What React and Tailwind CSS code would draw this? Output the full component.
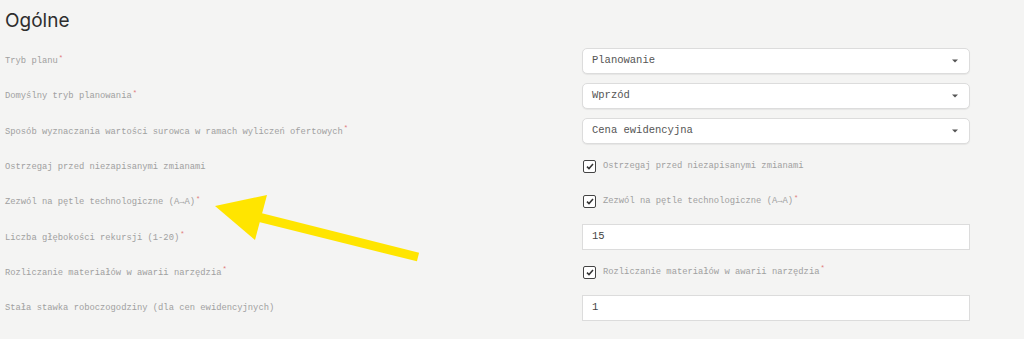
import React from "react";

const Req = () => <sup className="ml-[1px] text-[7px] text-[#e07a7a]">*</sup>;

const Chevron = () => (
  <svg width="6" height="4" viewBox="0 0 6 4" className="shrink-0">
    <path d="M0 0.5h6L3 3.5z" fill="#555" />
  </svg>
);

const Select = ({ value }) => (
  <div className="flex h-[26px] items-center justify-between rounded-[5px] border border-[#dcdcdc] bg-white pl-[9px] pr-[11px] shadow-[0_1px_1px_rgba(0,0,0,0.06)]">
    <span className="text-[10.5px] text-[#555]">{value}</span>
    <Chevron />
  </div>
);

const Input = ({ value }) => (
  <div className="flex h-[26px] items-center border border-[#dcdcdc] bg-white pl-[9px]">
    <span className="text-[10.5px] text-[#444]">{value}</span>
  </div>
);

const Check = ({ label, required }) => (
  <div className="flex items-center gap-[7px] pl-[1px]">
    <span className="flex h-[13px] w-[13px] items-center justify-center rounded-[2px] border-[1.5px] border-[#444] bg-white">
      <svg width="8" height="7" viewBox="0 0 8 7">
        <path d="M1 3.6l2 2L7 1" fill="none" stroke="#333" strokeWidth="1.5" />
      </svg>
    </span>
    <span className="text-[8.8px] text-[#a0a0a0]">
      {label}
      {required && <Req />}
    </span>
  </div>
);

const rows = [
  { label: "Tryb planu", req: true, control: <Select value="Planowanie" /> },
  { label: "Domyślny tryb planowania", req: true, control: <Select value="Wprzód" /> },
  {
    label: "Sposób wyznaczania wartości surowca w ramach wyliczeń ofertowych",
    req: true,
    control: <Select value="Cena ewidencyjna" />,
  },
  {
    label: "Ostrzegaj przed niezapisanymi zmianami",
    control: <Check label="Ostrzegaj przed niezapisanymi zmianami" />,
  },
  {
    label: "Zezwól na pętle technologiczne (A→A)",
    req: true,
    control: <Check label="Zezwól na pętle technologiczne (A→A)" required />,
  },
  { label: "Liczba głębokości rekursji (1-20)", req: true, control: <Input value="15" /> },
  {
    label: "Rozliczanie materiałów w awarii narzędzia",
    req: true,
    control: <Check label="Rozliczanie materiałów w awarii narzędzia" required />,
  },
  {
    label: "Stała stawka roboczogodziny (dla cen ewidencyjnych)",
    control: <Input value="1" />,
  },
];

export default function App() {
  return (
    <div className="relative h-[339px] w-[1024px] overflow-hidden bg-[#f4f4f3] font-['Liberation_Mono',monospace]">
      <h1 className="pl-[5px] pt-[7px] font-['Inter',sans-serif] text-[19px] leading-[28px] text-[#2e2e2e]">
        Ogólne
      </h1>
      <div className="mt-[8px] flex flex-col">
        {rows.map((r) => (
          <div key={r.label} className="flex h-[35.3px] items-center">
            <div className="w-[582px] shrink-0 pl-[5px] pt-[2px] text-[8.8px] text-[#a0a0a0]">
              {r.label}
              {r.req && <Req />}
            </div>
            <div className="w-[388px]">{r.control}</div>
          </div>
        ))}
      </div>

      {/* annotation arrow */}
      <svg className="pointer-events-none absolute left-0 top-0" width="1024" height="339">
        <line x1="418" y1="257" x2="250" y2="215" stroke="#ffe500" strokeWidth="9" />
        <polygon points="215,206 267,195 255,240" fill="#ffe500" />
      </svg>
    </div>
  );
}
